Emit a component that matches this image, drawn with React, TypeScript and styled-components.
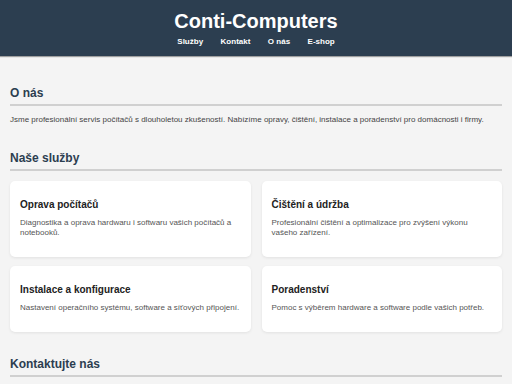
import React from "react";
import styled, { createGlobalStyle } from "styled-components";

const Global = createGlobalStyle`
  html, body { margin: 0; padding: 0; }
  body {
    background: #f4f4f4;
    font-family: "Liberation Sans", Arial, sans-serif;
    color: #333;
  }
`;

const Header = styled.header`
  background: #2c3e50;
  color: #fff;
  padding: 10px 0 9px;
  text-align: center;
  box-shadow: 0 1px 1px rgba(0, 0, 0, 0.35);
`;

const Title = styled.h1`
  margin: 0;
  font-size: 20px;
  line-height: 23px;
  font-weight: bold;
`;

const Nav = styled.nav`
  margin-top: 4px;
  display: flex;
  justify-content: center;
  gap: 17.5px;
`;

const NavLink = styled.a`
  color: #fff;
  text-decoration: none;
  font-size: 8px;
  line-height: 10px;
  font-weight: bold;
`;

const Main = styled.main`
  padding: 30px 10px 0;
  display: flex;
  flex-direction: column;
  gap: 25px;
`;

const Section = styled.section``;

const Heading = styled.h2`
  margin: 0;
  font-size: 12px;
  line-height: 14px;
  font-weight: bold;
  color: #2c3e50;
  padding-bottom: 4px;
  border-bottom: 2px solid #d0d0d0;
`;

const Text = styled.p`
  margin: 8px 0 0;
  font-size: 8px;
  line-height: 12px;
  color: #444;
`;

const Grid = styled.div`
  margin-top: 10px;
  display: grid;
  grid-template-columns: 1fr 1fr;
  gap: 9px 11px;
`;

const Card = styled.div`
  background: #fff;
  border-radius: 5px;
  padding: 18px 10px 19px;
  box-shadow: 0 1px 3px rgba(0, 0, 0, 0.08);
`;

const CardTitle = styled.h3`
  margin: 0 0 7px;
  font-size: 10px;
  line-height: 12px;
  font-weight: bold;
  color: #222;
`;

const CardText = styled.p`
  margin: 0;
  font-size: 8px;
  line-height: 10px;
  color: #555;
`;

const services = [
  {
    title: "Oprava počítačů",
    text: "Diagnostika a oprava hardwaru i softwaru vašich počítačů a notebooků.",
  },
  {
    title: "Čištění a údržba",
    text: "Profesionální čištění a optimalizace pro zvýšení výkonu vašeho zařízení.",
  },
  {
    title: "Instalace a konfigurace",
    text: "Nastavení operačního systému, software a síťových připojení.",
  },
  {
    title: "Poradenství",
    text: "Pomoc s výběrem hardware a software podle vašich potřeb.",
  },
];

export default function App() {
  return (
    <>
      <Global />
      <Header>
        <Title>Conti-Computers</Title>
        <Nav>
          <NavLink href="#sluzby">Služby</NavLink>
          <NavLink href="#kontakt">Kontakt</NavLink>
          <NavLink href="#onas">O nás</NavLink>
          <NavLink href="#eshop">E-shop</NavLink>
        </Nav>
      </Header>
      <Main>
        <Section id="onas">
          <Heading>O nás</Heading>
          <Text>
            Jsme profesionální servis počítačů s dlouholetou zkušeností. Nabízíme opravy, čištění,
            instalace a poradenství pro domácnosti i firmy.
          </Text>
        </Section>
        <Section id="sluzby">
          <Heading>Naše služby</Heading>
          <Grid>
            {services.map((s) => (
              <Card key={s.title}>
                <CardTitle>{s.title}</CardTitle>
                <CardText>{s.text}</CardText>
              </Card>
            ))}
          </Grid>
        </Section>
        <Section id="kontakt">
          <Heading>Kontaktujte nás</Heading>
        </Section>
      </Main>
    </>
  );
}
